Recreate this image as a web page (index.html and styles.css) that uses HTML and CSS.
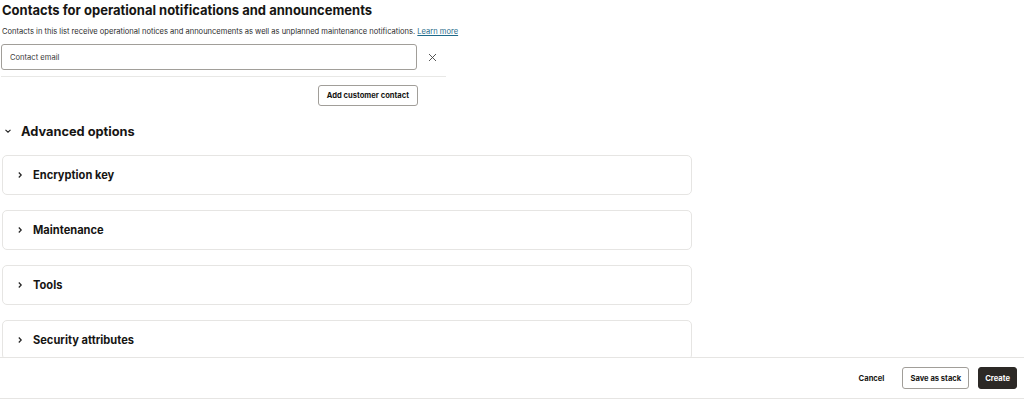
FILE: index.html
```html
<!DOCTYPE html>
<html lang="en">
<head>
    <meta charset="UTF-8">
    <meta name="viewport" content="width=device-width, initial-scale=1.0">
    <title>Create</title>
    <link rel="stylesheet" href="styles.css">
</head>
<body>
    <main class="page">
        <section class="contacts">
            <h2 class="contacts-title">Contacts for operational notifications and announcements</h2>
            <p class="contacts-desc">Contacts in this list receive operational notices and announcements as well as unplanned maintenance notifications. <a href="#">Learn more</a></p>
            <div class="contact-row">
                <input class="contact-input" type="text" placeholder="Contact email">
                <button class="icon-btn" aria-label="Remove">
                    <svg width="9" height="9" viewBox="0 0 9 9"><path d="M1 1L8 8M8 1L1 8" stroke="#444" stroke-width="0.9" fill="none"/></svg>
                </button>
            </div>
            <div class="contact-actions">
                <button class="btn">Add customer contact</button>
            </div>
        </section>

        <section class="advanced">
            <div class="advanced-head">
                <svg class="chev" width="8" height="8" viewBox="0 0 8 8"><path d="M1.5 2.8L4 5.2L6.5 2.8" stroke="#222" stroke-width="1.1" fill="none"/></svg>
                <h3>Advanced options</h3>
            </div>
            <div class="card"><svg class="chev" width="8" height="8" viewBox="0 0 8 8"><path d="M2.8 1.5L5.2 4L2.8 6.5" stroke="#222" stroke-width="1.2" fill="none"/></svg><span>Encryption key</span></div>
            <div class="card"><svg class="chev" width="8" height="8" viewBox="0 0 8 8"><path d="M2.8 1.5L5.2 4L2.8 6.5" stroke="#222" stroke-width="1.2" fill="none"/></svg><span>Maintenance</span></div>
            <div class="card"><svg class="chev" width="8" height="8" viewBox="0 0 8 8"><path d="M2.8 1.5L5.2 4L2.8 6.5" stroke="#222" stroke-width="1.2" fill="none"/></svg><span>Tools</span></div>
            <div class="card"><svg class="chev" width="8" height="8" viewBox="0 0 8 8"><path d="M2.8 1.5L5.2 4L2.8 6.5" stroke="#222" stroke-width="1.2" fill="none"/></svg><span>Security attributes</span></div>
        </section>
    </main>

    <footer class="footer">
        <button class="btn btn-link">Cancel</button>
        <button class="btn btn-outline">Save as stack</button>
        <button class="btn btn-primary">Create</button>
    </footer>
</body>
</html>
```

FILE: styles.css
```css
body {
    margin: 0;
    padding: 0;
    font-family: Inter, 'Liberation Sans', sans-serif;
    background-color: #ffffff;
    color: #161513;
}
.page {
    padding: 0 2px 60px 2px;
}
.contacts {
    width: 444px;
}
.contacts-title {
    margin: 0;
    padding-top: 1px;
    font-size: 13px;
    line-height: 18px;
    font-weight: 700;
}
.contacts-desc {
    margin: 8px 0 0 0;
    font-size: 7.55px;
    line-height: 10px;
    color: #2b2b2b;
    white-space: nowrap;
}
.contacts-desc a {
    color: #1e6a8a;
    text-decoration: underline;
}
.contact-row {
    display: flex;
    align-items: center;
    margin-top: 7px;
    margin-left: -1px;
    padding-bottom: 6px;
    border-bottom: 1px solid #e8e8e6;
}
.contact-input {
    box-sizing: border-box;
    width: 416px;
    height: 26px;
    padding: 0 8px;
    border: 1px solid #a19e99;
    border-radius: 3px;
    font-family: inherit;
    font-size: 7.6px;
    color: #161513;
}
.contact-input::placeholder {
    color: #3a3a3a;
}
.icon-btn {
    flex: 1;
    display: flex;
    justify-content: center;
    background: none;
    border: none;
    padding: 0 0 0 1px;
    cursor: pointer;
}
.contact-actions {
    display: flex;
    justify-content: flex-end;
    padding-right: 28px;
    margin-top: 8px;
}
.btn {
    font-family: inherit;
    font-size: 7.6px;
    font-weight: 700;
    height: 21px;
    padding: 0 8px;
    border: 1px solid #a19e99;
    border-radius: 3px;
    background: #ffffff;
    color: #161513;
    cursor: pointer;
}
.advanced {
    width: 690px;
}
.advanced-head {
    display: flex;
    align-items: center;
    margin-top: 16px;
    height: 18px;
}
.advanced-head .chev {
    margin-left: 2px;
    margin-right: 9px;
}
.advanced-head h3 {
    margin: 0;
    font-size: 12.8px;
    font-weight: 700;
}
.card {
    box-sizing: border-box;
    display: flex;
    align-items: center;
    height: 40px;
    margin-top: 15px;
    border: 1px solid #e6e5e3;
    border-radius: 5px;
    font-size: 11.1px;
    font-weight: 700;
}
.card .chev {
    margin-left: 13px;
    margin-right: 9px;
}
.footer {
    position: fixed;
    left: 0;
    right: 0;
    bottom: 0;
    height: 42px;
    box-sizing: border-box;
    display: flex;
    align-items: center;
    justify-content: flex-end;
    gap: 9px;
    padding-right: 7px;
    background: #ffffff;
    border-top: 1px solid #e6e5e3;
    border-bottom: 1px solid #e6e5e3;
}
.footer .btn {
    height: 22px;
}
.btn-link {
    border-color: transparent;
    margin-right: 0;
}
.btn-outline {
    padding: 0 7px;
}
.btn-primary {
    padding: 0 6px;
    background: #2c2926;
    border-color: #2c2926;
    color: #ffffff;
}
```
